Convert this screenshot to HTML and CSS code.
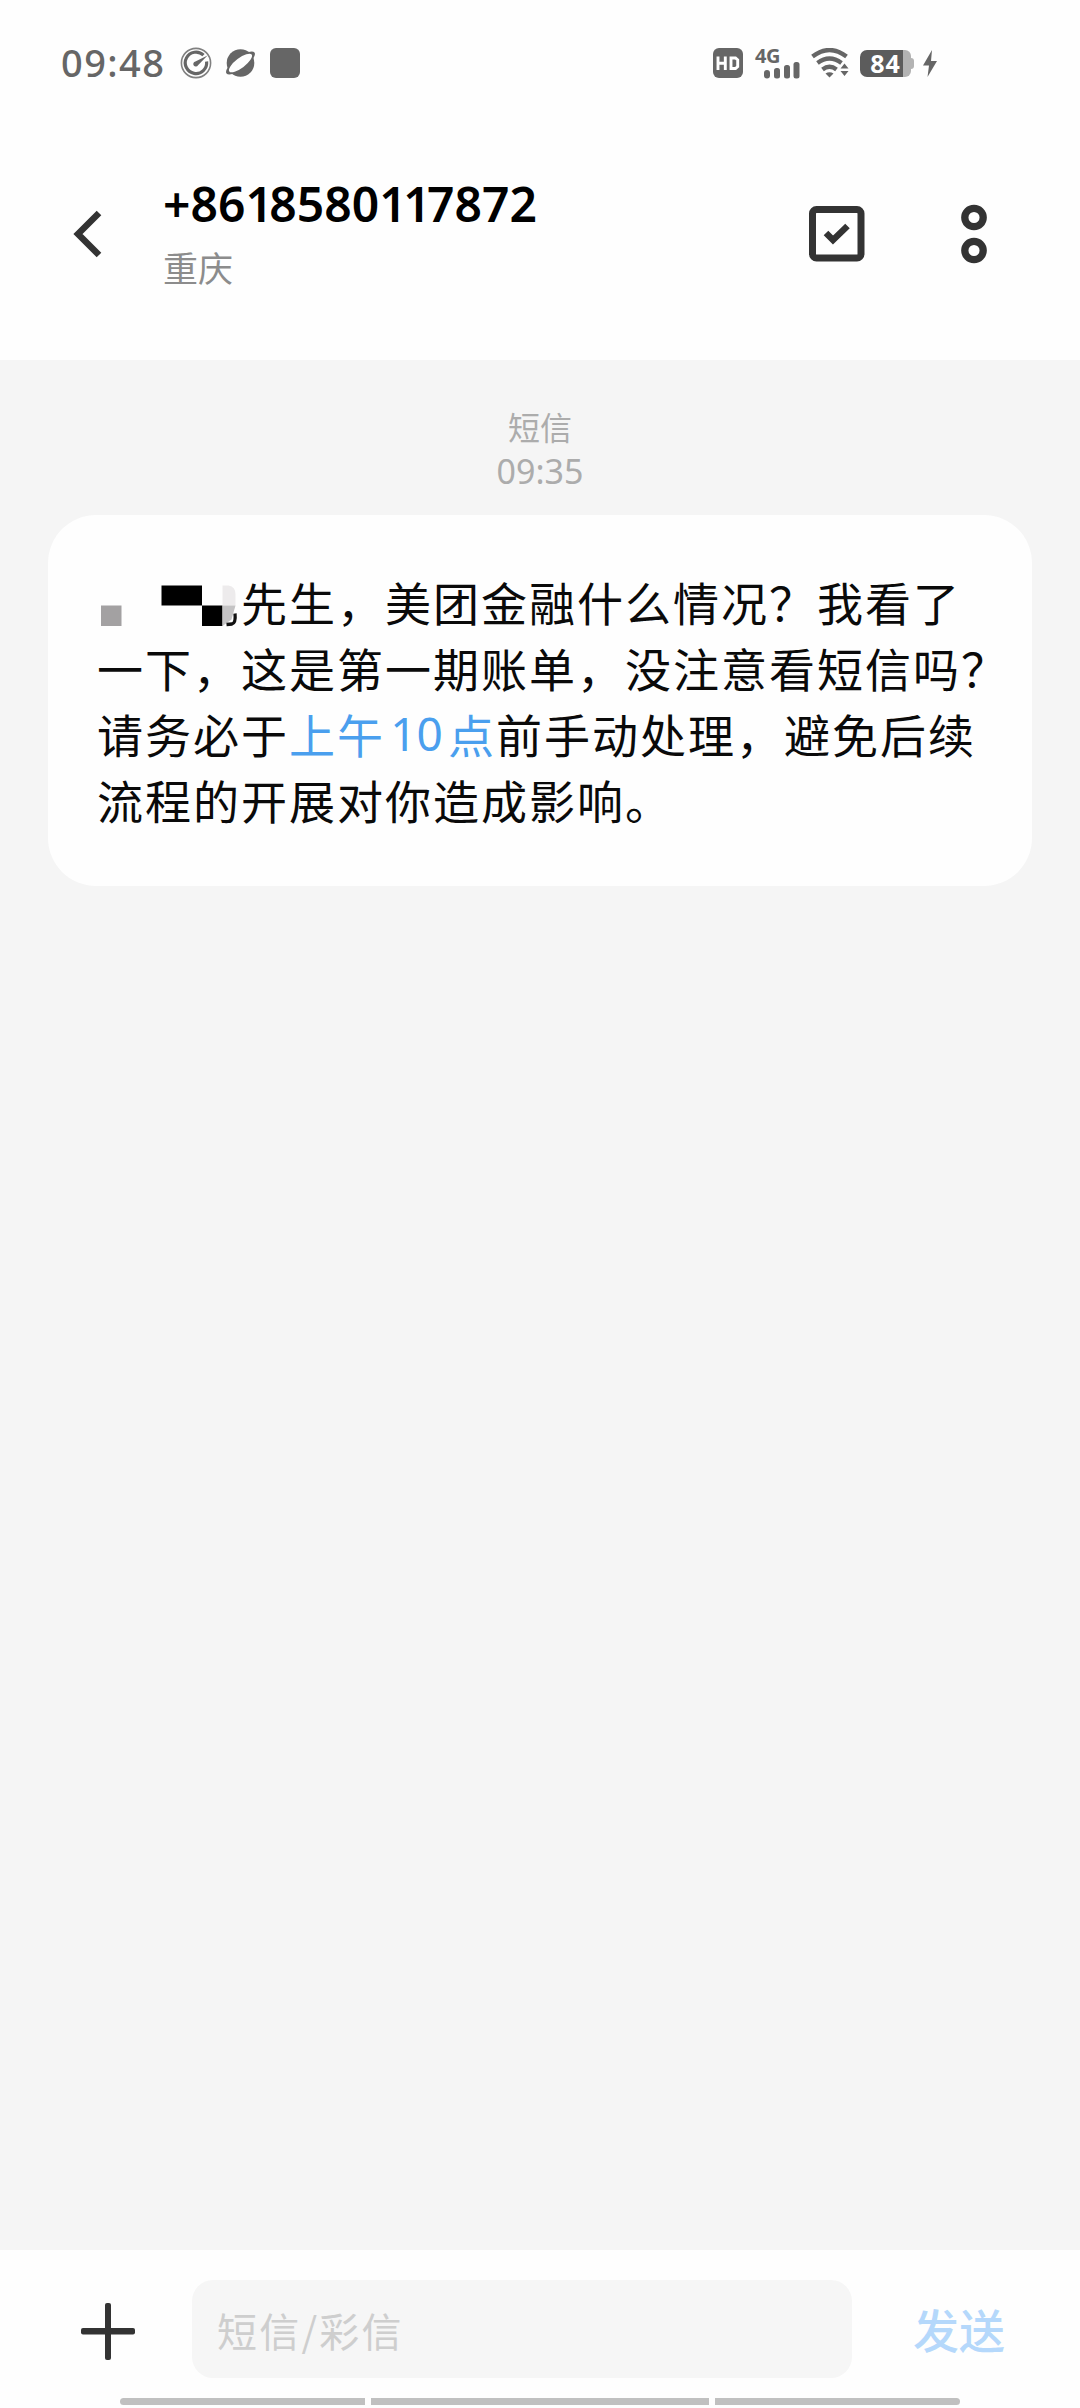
FILE: index.html
```html
<!DOCTYPE html>
<html lang="zh-CN">
<head>
<meta charset="utf-8">
<title>短信</title>
<link rel="stylesheet" href="styles.css">
</head>
<body>
<div class="status">
  <span class="clock">09:48</span>
  <svg class="ic-speed" width="32" height="32" viewBox="0 0 32 32">
    <circle cx="16" cy="16" r="14.600" fill="none" stroke="#808080" stroke-width="1.600"/>
    <path d="M23.500 8.200A10.700 10.700 0 1 0 26.600 14.500" fill="none" stroke="#666" stroke-width="3.200"/>
    <path d="M27.500 8.500 18 18.200a2.500 2.500 0 1 1-2.600-3.600z" fill="#666"/>
  </svg>
  <svg class="ic-planet" width="31" height="30" viewBox="0 0 31 30">
    <circle cx="15.500" cy="15" r="13.800" fill="#666"/>
    <ellipse cx="15.500" cy="15" rx="17.500" ry="6" transform="rotate(-37 15.500 15)" fill="#666"/>
    <ellipse cx="15.500" cy="15" rx="14" ry="4.900" transform="rotate(-37 15.500 15)" fill="#fefefe"/>
  </svg>
  <span class="ic-square"></span>
  <div class="status-right">
    <span class="hd"><svg width="30" height="30" viewBox="0 0 30 30"><path d="M5 8.500v13.500M12.300 8.500v13.500M5 15.200h7.300M18 10h4.500l2.200 2v6.500l-2.200 2H18zM18 8.700v13.100" fill="none" stroke="#fff" stroke-width="2.900"/></svg></span>
    <div class="signal">
      <span class="net">4G</span>
      <svg class="bars" width="36" height="18" viewBox="0 0 36 18" fill="#666"><rect x="0" y="9" width="6" height="8.500" rx="3"/><rect x="10" y="7" width="6" height="10.500" rx="2.500"/><rect x="20" y="4" width="6" height="13.500" rx="2.500"/><rect x="29.500" y="1" width="6" height="16.500" rx="2.500"/></svg>
    </div>
    <svg class="wifi" width="38" height="30" viewBox="0 0 38 30">
      <g fill="none" stroke="#666" stroke-width="4.300"><path d="M1.500 8.500Q18.500-4.500 35.500 8.500"/><path d="M6.500 15Q18.500 6 30.500 15"/><path d="M11.500 21.500Q18.500 16 25.500 21.500"/></g>
      <path d="M14.500 25.500q4-2.500 8 0l-4 4zM29.500 20.500l4-5 4 5zM29.500 23h8l-4 5z" fill="#666"/>
    </svg>
    <div class="battery"><span class="level">84</span><span class="rest"></span><span class="cap"></span></div>
    <svg class="bolt" width="14" height="27" viewBox="0 0 14 27"><path d="M9 0 0 15.500h6L4.500 27 14 11H8z" fill="#666"/></svg>
  </div>
</div>
<header class="header">
  <svg class="back" width="30" height="48" viewBox="0 0 30 48"><path d="M27 3 6 24l21 21" fill="none" stroke="#333" stroke-width="6.500"/></svg>
  <div class="contact">
    <div class="number">+86<i>1</i>8580<i>1</i><i>1</i>7872</div>
    <div class="place">重庆</div>
  </div>
  <svg class="select" width="56" height="56" viewBox="0 0 56 56"><rect x="3.500" y="3.500" width="48.500" height="48.500" rx="4" fill="none" stroke="#333" stroke-width="7"/><path d="M17 27l7 7 14.500-14" fill="none" stroke="#333" stroke-width="6.500"/></svg>
  <svg class="more" width="26" height="60" viewBox="0 0 26 60" fill="none" stroke="#333" stroke-width="7.300"><circle cx="13" cy="13.500" r="9.200"/><circle cx="13" cy="46.500" r="9.200"/></svg>
</header>
<main class="thread">
  <div class="stamp"><div class="kind">短信</div><div class="time">09:35</div></div>
  <div class="bubble">
    <div class="line"><span class="mask"><svg width="144" height="66" viewBox="0 0 144 66"><path fill="#a3a1a2" d="M4 37.500h20.500v20.500H4z"/><path d="M64.500 17.500h40.500v20H64.500zM105 37.500h20.500v20.500h-20.500z"/><path fill="#edebec" d="M125.500 17.500h6q7 1 7 9v11h-13z"/><path fill="#c4c3c4" d="M125.500 37.500h13l-4 14-9 6.500z"/><path fill="none" stroke="#111" stroke-width="3.300" d="M138 45.500q1 9.500-3 10.500l-5.500.5"/></svg></span>先生，美团金融什么情况？我看了</div>
    <div class="line">一下，这是第一期账单，没注意看短信吗？</div>
    <div class="line">请务必于<span class="link">上午<span class="num">10</span>点</span>前手动处理，避免后续</div>
    <div class="line">流程的开展对你造成影响。</div>
  </div>
</main>
<footer class="composer">
  <div class="row">
    <svg class="plus" width="54" height="57" viewBox="0 0 54 57" fill="#333"><rect x="24" width="6" height="57" rx="2"/><rect y="25" width="54" height="6.500" rx="2"/></svg>
    <div class="field">短信/彩信</div>
    <div class="send">发送</div>
  </div>
  <div class="nav"><span></span><span class="mid"></span><span></span></div>
</footer>
</body>
</html>
```
FILE: styles.css
```css
* { box-sizing: border-box; }
body {
  margin: 0;
  width: 1080px;
  height: 2408px;
  display: flex;
  flex-direction: column;
  background: #fefefe;
  font-family: "Noto Sans CJK SC", sans-serif;
  color: #0a0a0a;
  white-space: nowrap;
  overflow: hidden;
}
svg { display: block; flex: none; }

.status {
  height: 126px;
  padding-left: 61px;
  display: flex;
  align-items: center;
}
.clock {
  width: 119px;
  padding-bottom: 2px;
  font: 500 38px/60px "Noto Sans", sans-serif;
  letter-spacing: 1.4px;
  color: #666;
}
.ic-planet { margin-left: 13px; }
.ic-square {
  width: 30px;
  height: 30px;
  margin-left: 14px;
  border-radius: 6px;
  background: #666;
}
.status-right {
  margin-left: 413px;
  display: flex;
  align-items: center;
}
.hd {
  width: 30px;
  height: 30px;
  border-radius: 6px;
  background: #666;
}
.signal {
  width: 45px;
  height: 30px;
  margin-left: 12px;
}
.net {
  display: block;
  height: 13px;
  font: 700 20px/15px "Noto Sans", sans-serif;
  letter-spacing: -0.5px;
  color: #666;
}
.bars { margin-left: 9px; }
.wifi { margin-left: 11px; }
.battery {
  margin-left: 11px;
  height: 27px;
  display: flex;
  align-items: center;
}
.level {
  width: 43px;
  height: 27px;
  padding-left: 8px;
  border-radius: 7px 0 0 7px;
  background: #5c5c5c;
  color: #fff;
  font: 700 25px/26px "Noto Sans", sans-serif;
  letter-spacing: 1px;
  text-align: center;
}
.rest { width: 8px; height: 27px; background: #b3b3b3; border-radius: 0 6px 6px 0; }
.cap { width: 3px; height: 11px; background: #b3b3b3; border-radius: 0 3px 3px 0; }
.bolt { margin-left: 9px; }

.header {
  height: 234px;
  padding-left: 72px;
  display: flex;
}
.back { margin-top: 84px; }
.contact { width: 646px; margin-left: 61px; padding-top: 43px; }
.number {
  height: 71px;
  font: 600 48px/70px "Noto Sans", sans-serif;
  letter-spacing: 0;
  color: #000;
}
.number i { font-style: normal; letter-spacing: -3.5px; }
.place {
  height: 54px;
  font-size: 35px;
  line-height: 54px;
  color: #8c8c8c;
}
.select { margin-top: 80px; }
.more { margin: 78px 0 0 96px; }

.thread {
  height: 1890px;
  padding: 42px 48px 0;
  background: #f5f5f5;
}
.stamp {
  height: 113px;
  text-align: center;
  color: #acacac;
}
.kind { font-size: 32px; line-height: 48px; }
.time { font: 400 34px/42px "Noto Sans", sans-serif; }
.bubble {
  height: 371px;
  padding: 53px 0 0 49px;
  border-radius: 48px;
  background: #fefefe;
  font-size: 46px;
  letter-spacing: 2px;
}
.line { height: 66px; line-height: 66px; display: flex; }
.mask { width: 144px; }
.link { display: flex; color: #4a9fee; }
.num {
  width: 63px;
  text-align: center;
  letter-spacing: 0;
  font-family: "Noto Sans", sans-serif;
}

.composer { height: 158px; }
.row {
  height: 148px;
  padding: 30px 0 0 81px;
  display: flex;
}
.plus { margin-top: 23px; }
.field {
  width: 660px;
  height: 98px;
  margin-left: 57px;
  padding-left: 25px;
  border-radius: 21px;
  background: #f6f6f6;
  color: #cecece;
  font-size: 40px;
  line-height: 100px;
  letter-spacing: 2.2px;
}
.send {
  margin-left: 61px;
  color: #b5d8fb;
  font-size: 46px;
  font-weight: 500;
  line-height: 96px;
}
.nav {
  display: flex;
  gap: 6px;
  padding-left: 120px;
  height: 7px;
}
.nav span {
  width: 245px;
  background: #c0c0c0;
  border-radius: 4px 0 0 4px;
}
.nav .mid { width: 338px; border-radius: 0; }
.nav span:last-child { border-radius: 0 4px 4px 0; }
```
